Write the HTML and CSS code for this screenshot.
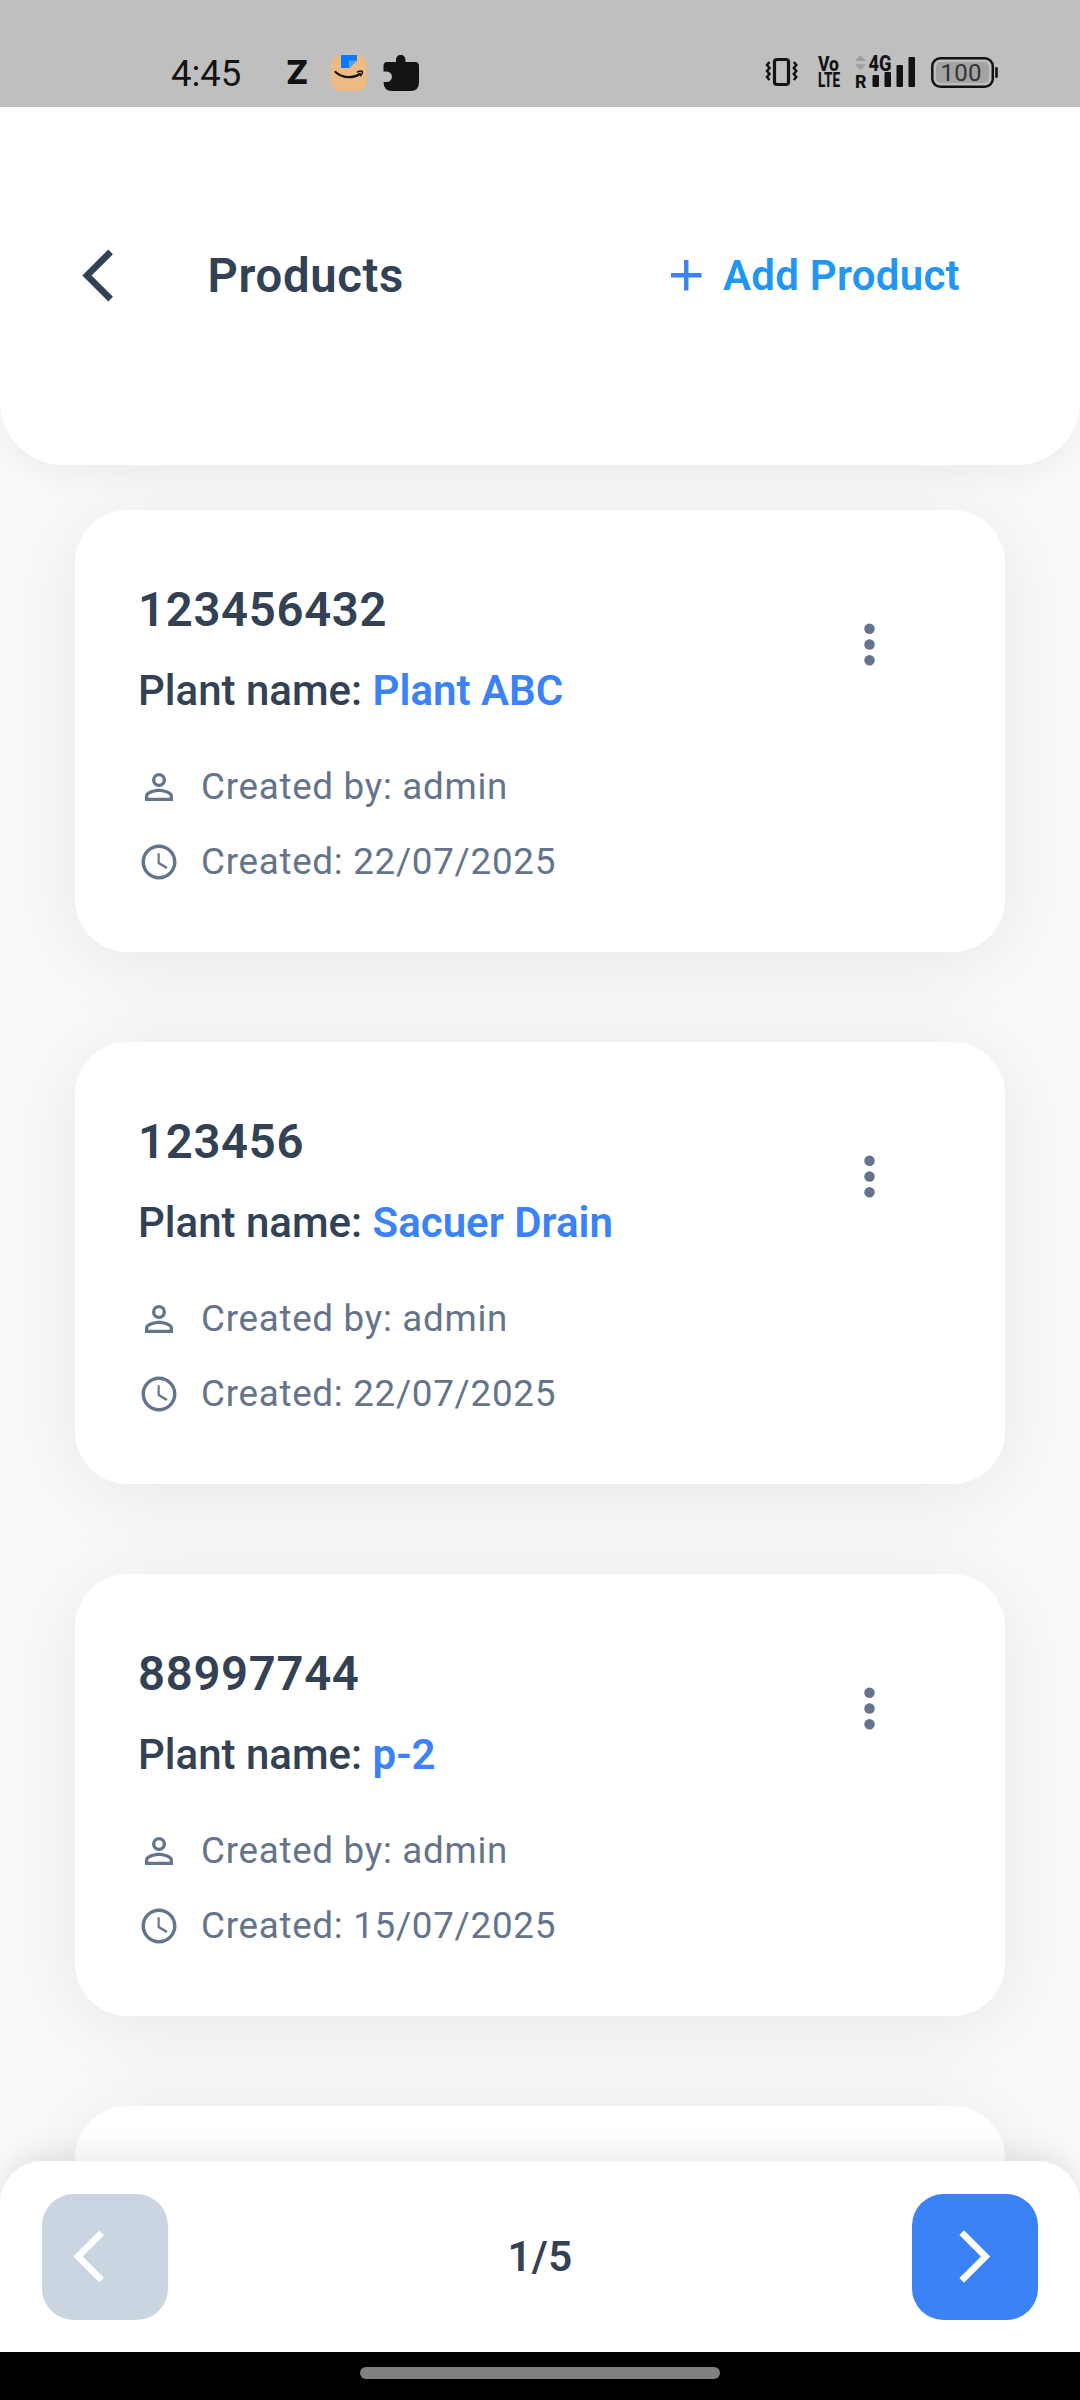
FILE: index.html
```html
<!DOCTYPE html>
<html lang="en">
<head>
<meta charset="utf-8">
<title>Products</title>
<link rel="stylesheet" href="styles.css">
</head>
<body>
<svg class="defs" width="0" height="0" aria-hidden="true">
  <symbol id="person" viewBox="0 0 24 24"><path d="M12 5.9a2.1 2.1 0 1 1 0 4.2 2.1 2.1 0 0 1 0-4.2m0 9c2.97 0 6.1 1.46 6.1 2.1v1.1H5.9V17c0-.64 3.13-2.1 6.1-2.1M12 4a4 4 0 1 0 0 8 4 4 0 0 0 0-8zm0 9c-2.67 0-8 1.34-8 4v3h16v-3c0-2.66-5.33-4-8-4z"/></symbol>
  <symbol id="clock" viewBox="0 0 24 24"><path d="M11.99 2C6.47 2 2 6.48 2 12s4.47 10 9.99 10C17.52 22 22 17.52 22 12S17.52 2 11.99 2zM12 20a8 8 0 1 1 0-16 8 8 0 0 1 0 16zm.4-13H11.2v6l5 3 .7-1.1-4.5-2.7z"/></symbol>
  <symbol id="more" viewBox="0 0 24 24"><circle cx="12" cy="6" r="2"/><circle cx="12" cy="12" r="2"/><circle cx="12" cy="18" r="2"/></symbol>
  <symbol id="back" viewBox="0 0 24 24"><path d="M17.51 3.87 15.73 2.1 5.84 12l9.9 9.9 1.77-1.77L9.38 12z"/></symbol>
  <symbol id="forward" viewBox="0 0 24 24"><path d="M6.23 20.23 8 22l10-10L8 2 6.23 3.77 14.46 12z"/></symbol>
  <symbol id="plus" viewBox="0 0 24 24"><path d="M19 13h-6v6h-2v-6H5v-2h6V5h2v6h6z"/></symbol>
</svg>

<div class="screen">
  <div class="status">
    <div class="status-left">
      <span class="time">4:45</span>
      <span class="app-z">Z</span>
      <svg class="app-shop" width="36" height="36" viewBox="0 0 36 36">
        <rect width="36" height="36" rx="9.5" fill="#edba82"/>
        <path d="M10 0h16v5.500L18.500 13H10z" fill="#0a7aff"/>
        <path d="M18 5.500h8L18 13z" fill="#58a5f5"/>
        <path d="M4.500 17c7 6.500 17.500 6.500 24.500 2" fill="none" stroke="#111" stroke-width="2.300" stroke-linecap="round"/>
        <path d="M26.500 17c2-1 4-1.200 4.700-.6.500.8-.3 2.900-1.500 4.300" fill="none" stroke="#111" stroke-width="1.400" stroke-linecap="round"/>
      </svg>
      <svg width="36" height="36" viewBox="0 0 36 36"><path fill="#131313" d="M4 7h9V4.500a4.700 4.700 0 0 1 9.400 0V7H32q4 0 4 4v16.500q0 8.500-8.500 8.500H9q-8.500 0-8.500-9h3.300a5.200 5.200 0 0 0 0-10.400H.5V11Q.500 7 4 7z"/></svg>
    </div>
    <div class="status-right">
      <svg class="vibrate" width="34" height="45" viewBox="765 50 34 45">
        <rect x="774.500" y="59.500" width="14" height="25" rx="2.500" stroke-width="3.200"/>
        <path d="M769.500 62l-2.500 3 2.500 3-2.500 3 2.500 3-2.500 3 2.500 3" stroke-width="2.500"/>
        <path d="M793.800 62l2.500 3-2.500 3 2.500 3-2.500 3 2.500 3-2.500 3" stroke-width="2.500"/>
      </svg>
      <svg width="24" height="45" viewBox="817 50 24 45" class="glyphs">
        <text x="818" y="71" font-size="20" textLength="21" lengthAdjust="spacingAndGlyphs">Vo</text>
        <text x="818" y="86.500" font-size="19.500" textLength="22" lengthAdjust="spacingAndGlyphs">LTE</text>
      </svg>
      <svg width="62" height="45" viewBox="854 50 62 45" class="glyphs">
        <path d="M855 61l5.500-5.700L866 61zM855 64.300l5.500 5.700 5.500-5.700z" fill="#9d9d9d"/>
        <text x="868.500" y="70.500" font-size="21.500" textLength="23" lengthAdjust="spacingAndGlyphs">4G</text>
        <text x="855" y="88" font-size="18.500" textLength="11.500" lengthAdjust="spacingAndGlyphs">R</text>
        <rect x="872.500" y="75" width="6.500" height="12" rx="1"/>
        <rect x="884.500" y="72" width="6.500" height="15" rx="1"/>
        <rect x="896.500" y="65" width="6.500" height="22" rx="1"/>
        <rect x="908.500" y="57" width="6.500" height="30" rx="1"/>
      </svg>
      <svg width="69" height="45" viewBox="930 50 69 45">
        <rect x="932.300" y="58.200" width="60.500" height="28.500" rx="8" fill="none" stroke="#131313" stroke-width="2.500"/>
        <rect x="936" y="62" width="53" height="21" rx="5" fill="#a3a3a3"/>
        <rect x="995.200" y="67" width="2.600" height="11" rx="1.300" fill="#131313"/>
        <text x="940.500" y="81" font-size="24" textLength="41" fill="#333">100</text>
      </svg>
    </div>
  </div>

  <header class="header">
    <svg class="icon-lg"><use href="#back"/></svg>
    <h1 class="heading">Products</h1>
    <button class="add"><svg class="plus"><use href="#plus"/></svg><span>Add Product</span></button>
  </header>

  <main class="list">
    <article class="card">
      <div class="card-body">
        <h2 class="code">123456432</h2>
        <p class="plant">Plant name: <b>Plant ABC</b></p>
        <p class="meta"><svg class="icon-sm"><use href="#person"/></svg><span>Created by: admin</span></p>
        <p class="meta"><svg class="icon-sm"><use href="#clock"/></svg><span>Created: 22/07/2025</span></p>
      </div>
      <svg class="icon-lg more"><use href="#more"/></svg>
    </article>
    <article class="card">
      <div class="card-body">
        <h2 class="code">123456</h2>
        <p class="plant">Plant name: <b>Sacuer Drain</b></p>
        <p class="meta"><svg class="icon-sm"><use href="#person"/></svg><span>Created by: admin</span></p>
        <p class="meta"><svg class="icon-sm"><use href="#clock"/></svg><span>Created: 22/07/2025</span></p>
      </div>
      <svg class="icon-lg more"><use href="#more"/></svg>
    </article>
    <article class="card">
      <div class="card-body">
        <h2 class="code">88997744</h2>
        <p class="plant">Plant name: <b>p-2</b></p>
        <p class="meta"><svg class="icon-sm"><use href="#person"/></svg><span>Created by: admin</span></p>
        <p class="meta"><svg class="icon-sm"><use href="#clock"/></svg><span>Created: 15/07/2025</span></p>
      </div>
      <svg class="icon-lg more"><use href="#more"/></svg>
    </article>
    <article class="card"></article>
  </main>

  <footer class="pager">
    <button class="page-btn prev"><svg class="icon-lg"><use href="#back"/></svg></button>
    <span class="page">1/5</span>
    <button class="page-btn next"><svg class="icon-lg"><use href="#forward"/></svg></button>
  </footer>
  <div class="navbar"><div class="pill"></div></div>
</div>
</body>
</html>
```
FILE: styles.css
```css
* { box-sizing: border-box; margin: 0; padding: 0; }
body { font-family: Roboto, sans-serif; background: #f9fafc; color: #334155; }
svg { display: block; flex: none; fill: currentColor; }
button { border: 0; background: none; font: inherit; color: inherit; }
.defs { position: absolute; }

.screen { width: 1080px; height: 2400px; display: flex; flex-direction: column; overflow: hidden; }

.status { height: 107px; flex: none; background: #bfbfbf; color: #131313; display: flex; justify-content: space-between; padding: 50px 81px 0 171px; position: relative; z-index: 3; }
.status-left { display: flex; height: 45px; align-items: center; }
.status-left svg { margin-right: 16px; }
.time { width: 115px; font-size: 36.5px; line-height: 45px; padding-top: 1px; }
.app-z { width: 45px; font: 800 33px/45px Inter, sans-serif; }
.status-right { display: flex; }
.status-right svg:nth-child(1) { margin-right: 18px; }
.status-right svg:nth-child(2) { margin-right: 13px; }
.status-right svg:nth-child(3) { margin-right: 14px; }
.vibrate { fill: none; stroke: currentColor; }
.glyphs { font-weight: 800; }

.icon-lg { width: 63px; height: 63px; }
.icon-sm { width: 42px; height: 42px; }

.header { height: 357.700px; flex: none; background: #fff; border-radius: 0 0 63px 63px; box-shadow: 0 10px 32px rgba(0,0,0,.06); display: flex; align-items: center; padding: 0 120px 20px 66.500px; position: relative; z-index: 2; }
.heading { font-size: 47.250px; font-weight: 600; letter-spacing: .66px; margin-left: 78px; line-height: 56px; }
.add { margin-left: auto; display: flex; align-items: center; gap: 10.500px; color: #2196f3; font-size: 42px; font-weight: 600; letter-spacing: .26px; line-height: 50px; }
.plus { width: 52.500px; height: 52.500px; color: #3b82f6; margin-top: -1px; }

.list { flex: 1; min-height: 0; overflow: hidden; padding: 44.900px 75px 0; display: flex; flex-direction: column; gap: 89.250px; }
.card { height: 442.750px; flex: none; background: #fff; border-radius: 52.500px; box-shadow: 0 10px 86px rgba(0,0,0,.085); display: flex; justify-content: space-between; padding: 72.300px 103.800px 0 63px; }
.code { font-size: 47.250px; font-weight: 600; line-height: 56px; letter-spacing: .7px; }
.plant { font-size: 42px; font-weight: 500; line-height: 50px; margin: 28px 0 50px; }
.plant b { font-weight: 600; color: #3b82f6; }
.meta { display: flex; align-items: center; gap: 21px; height: 43px; font-size: 36.750px; line-height: 43px; letter-spacing: .72px; color: #64748b; margin-bottom: 32px; }
.meta span { margin-top: -2px; }
.more { color: #64748b; margin-top: 31px; }

.pager { height: 191px; margin-top: -42px; flex: none; background: #fff; border-radius: 42px 42px 0 0; box-shadow: 0 -5px 32px rgba(0,0,0,.1); display: flex; align-items: center; justify-content: space-between; padding: 0 42px; position: relative; z-index: 2; }
.page { font-size: 42px; font-weight: 600; letter-spacing: .3px; }
.page-btn { width: 126px; height: 126px; border-radius: 31.500px; display: flex; align-items: center; justify-content: center; color: #fff; }
.prev { background: #cbd5e1; padding-right: 31px; }
.next { background: #3b82f6; padding-right: 1px; }

.navbar { height: 48px; flex: none; background: #000; padding-top: 15px; position: relative; z-index: 3; }
.pill { width: 360px; height: 12px; border-radius: 6px; background: #808080; margin: 0 auto; }
```
